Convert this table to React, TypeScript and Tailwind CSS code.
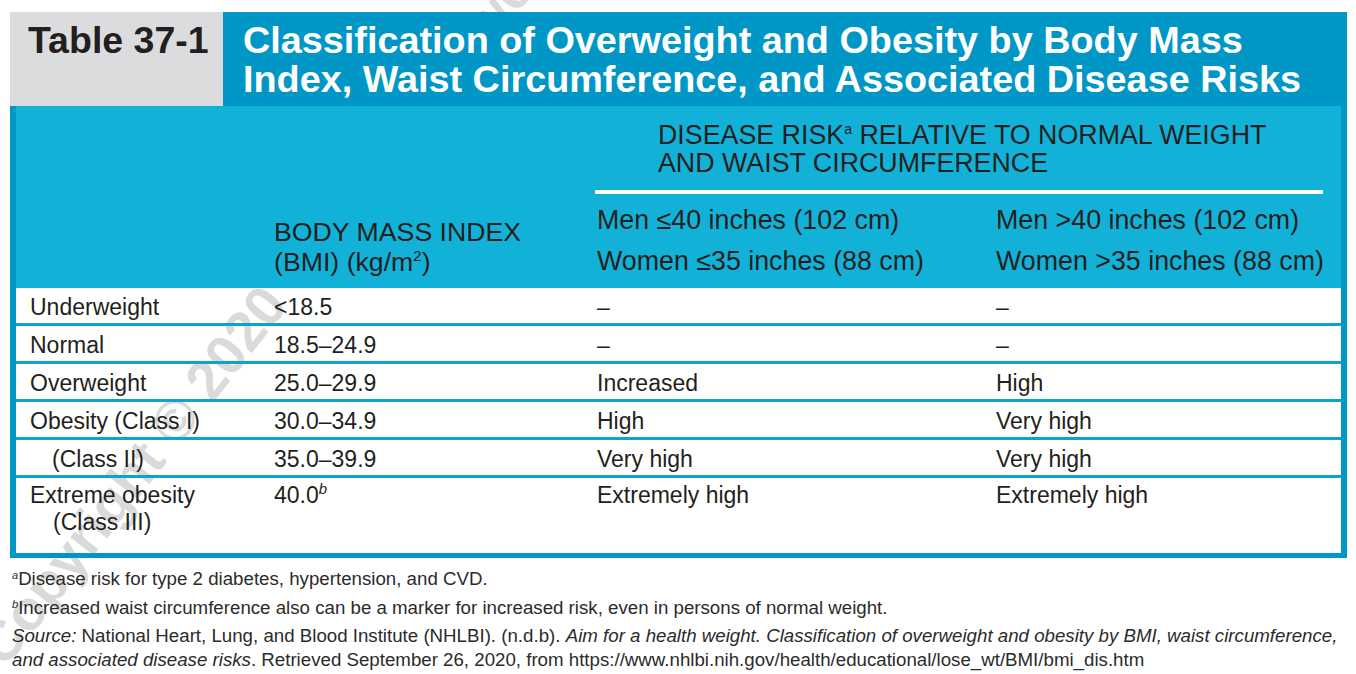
import React from "react";

// Table 37-1 : BMI / waist circumference risk classification

const rows = [
    { label: "Underweight", bmi: "<18.5", low: "–", high: "–" },
    { label: "Normal", bmi: "18.5–24.9", low: "–", high: "–" },
    { label: "Overweight", bmi: "25.0–29.9", low: "Increased", high: "High" },
    { label: "Obesity (Class I)", bmi: "30.0–34.9", low: "High", high: "Very high" },
    { label: "(Class II)", bmi: "35.0–39.9", low: "Very high", high: "Very high", indent: true },
];

const font = { fontFamily: '"Liberation Sans", Arial, Helvetica, sans-serif' };

export default function App() {
    return (
        <div className="relative w-[1356px] h-[674px] bg-white overflow-hidden text-[#231f20]" style={font}>
            {/* watermark, sits under the blue panels */}
            <div className="absolute -left-[32px] top-[640px] z-0 origin-top-left -rotate-[52deg] whitespace-nowrap text-[56px] font-bold text-[#dadada] leading-none select-none">
                Copyright © 2020 Wolters Kluwer
            </div>

            <div className="relative z-10 ml-[10px] pt-[12px] w-[1337px]">
                {/* Title bar */}
                <div className="flex h-[94px]">
                    <div className="w-[213px] bg-[#dcdcdf] pl-[18px] pt-[9px]">
                        <div className="text-[37.5px] leading-[39px] font-bold text-[#231f20]">Table 37-1</div>
                    </div>
                    <div className="flex-1 bg-[#0096c6] pl-[20px] pt-[9px]">
                        <div className="text-[37.8px] leading-[39px] font-bold text-white whitespace-nowrap">
                            Classification of Overweight and Obesity by Body Mass
                            <br />
                            Index, Waist Circumference, and Associated Disease Risks
                        </div>
                    </div>
                </div>

                {/* Table */}
                <div className="border-x-[6px] border-b-[5px] border-[#0096c6]">
                    {/* Column headers */}
                    <div className="flex bg-[#12b2d8] h-[182px]">
                        <div className="w-[244px]" />
                        <div className="w-[323px] flex items-end pl-[14px] pb-[11px]">
                            <div className="text-[26.7px] leading-[30px] whitespace-nowrap">
                                BODY MASS INDEX
                                <br />
                                (BMI) (kg/m<sup className="text-[15px] -top-[10px]">2</sup>)
                            </div>
                        </div>
                        <div className="flex-1 flex flex-col pt-[15px]">
                            <div className="pl-[75px] text-[26.8px] leading-[28px] whitespace-nowrap">
                                DISEASE RISK<sup className="text-[14px] -top-[10px]">a</sup> RELATIVE TO NORMAL WEIGHT
                                <br />
                                AND WAIST CIRCUMFERENCE
                            </div>
                            <div className="mt-[13px] ml-[12px] mr-[18px] h-[4px] bg-white" />
                            <div className="flex mt-[6px] text-[26.8px] leading-[41px] whitespace-nowrap">
                                <div className="w-[399px] pl-[14px]">
                                    Men ≤40 inches (102 cm)
                                    <br />
                                    Women ≤35 inches (88 cm)
                                </div>
                                <div className="flex-1 pl-[14px]">
                                    Men &gt;40 inches (102 cm)
                                    <br />
                                    Women &gt;35 inches (88 cm)
                                </div>
                            </div>
                        </div>
                    </div>

                    {/* Body rows */}
                    <div className="text-[23px]">
                        {rows.map((r) => (
                            <div key={r.label} className="flex h-[38px] border-b-[3px] border-[#0aa4d1] leading-[35px] pt-[2px]">
                                <div className={`w-[244px] ${r.indent ? "pl-[36px]" : "pl-[14px]"}`}>{r.label}</div>
                                <div className="w-[323px] pl-[14px]">{r.bmi}</div>
                                <div className="w-[399px] pl-[14px]">{r.low}</div>
                                <div className="flex-1 pl-[14px]">{r.high}</div>
                            </div>
                        ))}
                        <div className="flex h-[75px] leading-[27px] pt-[4px]">
                            <div className="w-[244px] pl-[14px]">
                                Extreme obesity
                                <br />
                                <span className="pl-[23px]">(Class III)</span>
                            </div>
                            <div className="w-[323px] pl-[14px]">
                                40.0<sup className="italic text-[15px] -top-[9px]">b</sup>
                            </div>
                            <div className="w-[399px] pl-[14px]">Extremely high</div>
                            <div className="flex-1 pl-[14px]">Extremely high</div>
                        </div>
                    </div>
                </div>

                {/* Footnotes */}
                <div className="pl-[2px] mt-[6px] text-[18.7px] text-[#2b2b2b]">
                    <div className="leading-[29px]">
                        <sup className="italic text-[11px] -top-[6px]">a</sup>Disease risk for type 2 diabetes, hypertension, and CVD.
                    </div>
                    <div className="leading-[29px]">
                        <sup className="italic text-[11px] -top-[6px]">b</sup>Increased waist circumference also can be a marker for increased risk, even in persons of normal weight.
                    </div>
                    <div className="leading-[24px] mt-[2px] whitespace-nowrap">
                        <i>Source:</i> National Heart, Lung, and Blood Institute (NHLBI). (n.d.b).{" "}
                        <i>Aim for a health weight. Classification of overweight and obesity by BMI, waist circumference,</i>
                        <br />
                        <i>and associated disease risks</i>. Retrieved September 26, 2020, from https://www.nhlbi.nih.gov/health/educational/lose_wt/BMI/bmi_dis.htm
                    </div>
                </div>
            </div>
        </div>
    );
}
